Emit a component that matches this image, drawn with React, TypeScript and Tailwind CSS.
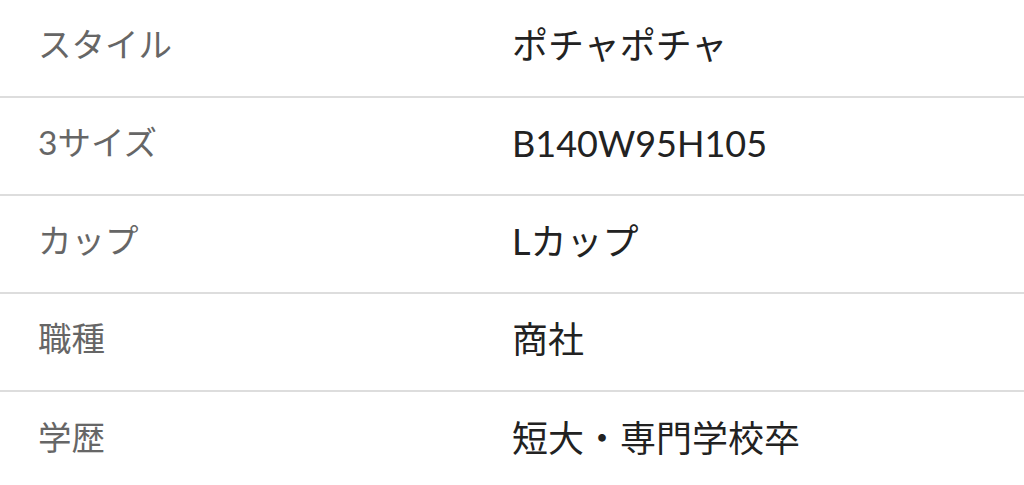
import React from "react";

const rows: [string, string][] = [
  ["スタイル", "ポチャポチャ"],
  ["3サイズ", "B140W95H105"],
  ["カップ", "Lカップ"],
  ["職種", "商社"],
  ["学歴", "短大・専門学校卒"],
];

export default function App() {
  return (
    <div
      className="w-[1024px] h-[485px] overflow-hidden bg-white"
      style={{ fontFamily: 'Lato, "Noto Sans CJK JP", sans-serif' }}
    >
      {rows.map(([k, v], i) => (
        <div
          key={k}
          className={`flex items-center h-[98px] pb-[6px] ${i < rows.length - 1 ? "border-b-2 border-[#dddddd]" : ""}`}
        >
          <div className="w-[512px] pl-[38px] text-[33.5px] text-[#666666] leading-none">{k}</div>
          <div className="text-[36px] text-[#222222] leading-none">{v}</div>
        </div>
      ))}
    </div>
  );
}
